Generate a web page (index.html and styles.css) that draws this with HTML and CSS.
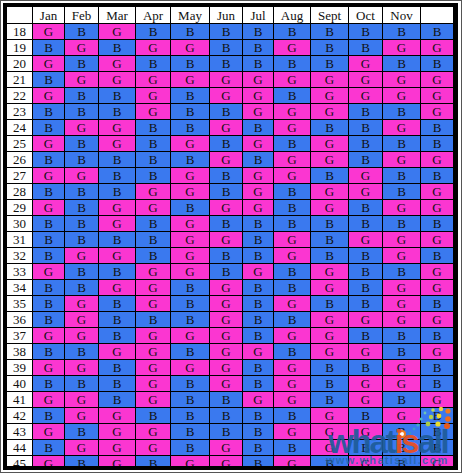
FILE: index.html
```html
<!DOCTYPE html>
<html>
<head>
<meta charset="utf-8">
<title>Chinese Gender Chart</title>
<link rel="stylesheet" href="styles.css">
</head>
<body>
<div class="frame">
  <div class="board">
    <div class="chart">
      <div class="h"></div><div class="h">Jan</div><div class="h">Feb</div><div class="h">Mar</div><div class="h">Apr</div><div class="h">May</div><div class="h">Jun</div><div class="h">Jul</div><div class="h">Aug</div><div class="h">Sept</div><div class="h">Oct</div><div class="h">Nov</div><div class="h"></div>
      <div class="n">18</div><div class="g">G</div><div class="b">B</div><div class="g">G</div><div class="b">B</div><div class="b">B</div><div class="b">B</div><div class="b">B</div><div class="b">B</div><div class="b">B</div><div class="b">B</div><div class="b">B</div><div class="b">B</div>
      <div class="n">19</div><div class="b">B</div><div class="g">G</div><div class="b">B</div><div class="g">G</div><div class="g">G</div><div class="b">B</div><div class="b">B</div><div class="g">G</div><div class="b">B</div><div class="b">B</div><div class="g">G</div><div class="g">G</div>
      <div class="n">20</div><div class="g">G</div><div class="b">B</div><div class="g">G</div><div class="b">B</div><div class="b">B</div><div class="b">B</div><div class="b">B</div><div class="b">B</div><div class="b">B</div><div class="g">G</div><div class="b">B</div><div class="b">B</div>
      <div class="n">21</div><div class="b">B</div><div class="g">G</div><div class="g">G</div><div class="g">G</div><div class="g">G</div><div class="g">G</div><div class="g">G</div><div class="g">G</div><div class="g">G</div><div class="g">G</div><div class="g">G</div><div class="g">G</div>
      <div class="n">22</div><div class="g">G</div><div class="b">B</div><div class="b">B</div><div class="g">G</div><div class="b">B</div><div class="g">G</div><div class="g">G</div><div class="b">B</div><div class="g">G</div><div class="g">G</div><div class="g">G</div><div class="g">G</div>
      <div class="n">23</div><div class="b">B</div><div class="b">B</div><div class="b">B</div><div class="g">G</div><div class="b">B</div><div class="b">B</div><div class="g">G</div><div class="g">G</div><div class="g">G</div><div class="b">B</div><div class="b">B</div><div class="g">G</div>
      <div class="n">24</div><div class="b">B</div><div class="g">G</div><div class="g">G</div><div class="b">B</div><div class="b">B</div><div class="g">G</div><div class="b">B</div><div class="g">G</div><div class="b">B</div><div class="b">B</div><div class="g">G</div><div class="b">B</div>
      <div class="n">25</div><div class="g">G</div><div class="b">B</div><div class="g">G</div><div class="b">B</div><div class="g">G</div><div class="b">B</div><div class="g">G</div><div class="b">B</div><div class="g">G</div><div class="b">B</div><div class="b">B</div><div class="b">B</div>
      <div class="n">26</div><div class="b">B</div><div class="b">B</div><div class="b">B</div><div class="b">B</div><div class="b">B</div><div class="g">G</div><div class="b">B</div><div class="g">G</div><div class="g">G</div><div class="b">B</div><div class="g">G</div><div class="g">G</div>
      <div class="n">27</div><div class="g">G</div><div class="g">G</div><div class="b">B</div><div class="b">B</div><div class="g">G</div><div class="b">B</div><div class="g">G</div><div class="g">G</div><div class="b">B</div><div class="g">G</div><div class="b">B</div><div class="b">B</div>
      <div class="n">28</div><div class="b">B</div><div class="b">B</div><div class="b">B</div><div class="g">G</div><div class="g">G</div><div class="b">B</div><div class="g">G</div><div class="b">B</div><div class="g">G</div><div class="g">G</div><div class="b">B</div><div class="g">G</div>
      <div class="n">29</div><div class="g">G</div><div class="b">B</div><div class="g">G</div><div class="g">G</div><div class="b">B</div><div class="g">G</div><div class="g">G</div><div class="b">B</div><div class="g">G</div><div class="b">B</div><div class="g">G</div><div class="g">G</div>
      <div class="n">30</div><div class="b">B</div><div class="b">B</div><div class="g">G</div><div class="b">B</div><div class="g">G</div><div class="b">B</div><div class="b">B</div><div class="b">B</div><div class="b">B</div><div class="b">B</div><div class="b">B</div><div class="b">B</div>
      <div class="n">31</div><div class="b">B</div><div class="b">B</div><div class="b">B</div><div class="b">B</div><div class="g">G</div><div class="g">G</div><div class="b">B</div><div class="g">G</div><div class="b">B</div><div class="g">G</div><div class="g">G</div><div class="g">G</div>
      <div class="n">32</div><div class="b">B</div><div class="g">G</div><div class="g">G</div><div class="b">B</div><div class="g">G</div><div class="b">B</div><div class="b">B</div><div class="g">G</div><div class="b">B</div><div class="b">B</div><div class="g">G</div><div class="b">B</div>
      <div class="n">33</div><div class="g">G</div><div class="b">B</div><div class="b">B</div><div class="g">G</div><div class="g">G</div><div class="b">B</div><div class="g">G</div><div class="b">B</div><div class="g">G</div><div class="b">B</div><div class="b">B</div><div class="g">G</div>
      <div class="n">34</div><div class="b">B</div><div class="b">B</div><div class="g">G</div><div class="g">G</div><div class="b">B</div><div class="g">G</div><div class="b">B</div><div class="b">B</div><div class="g">G</div><div class="b">B</div><div class="g">G</div><div class="g">G</div>
      <div class="n">35</div><div class="b">B</div><div class="g">G</div><div class="b">B</div><div class="g">G</div><div class="b">B</div><div class="g">G</div><div class="b">B</div><div class="g">G</div><div class="b">B</div><div class="b">B</div><div class="g">G</div><div class="b">B</div>
      <div class="n">36</div><div class="b">B</div><div class="g">G</div><div class="b">B</div><div class="b">B</div><div class="b">B</div><div class="g">G</div><div class="b">B</div><div class="b">B</div><div class="g">G</div><div class="g">G</div><div class="g">G</div><div class="g">G</div>
      <div class="n">37</div><div class="g">G</div><div class="g">G</div><div class="b">B</div><div class="g">G</div><div class="g">G</div><div class="g">G</div><div class="b">B</div><div class="g">G</div><div class="g">G</div><div class="b">B</div><div class="b">B</div><div class="b">B</div>
      <div class="n">38</div><div class="b">B</div><div class="b">B</div><div class="g">G</div><div class="g">G</div><div class="b">B</div><div class="g">G</div><div class="g">G</div><div class="b">B</div><div class="g">G</div><div class="g">G</div><div class="b">B</div><div class="g">G</div>
      <div class="n">39</div><div class="g">G</div><div class="g">G</div><div class="b">B</div><div class="g">G</div><div class="g">G</div><div class="g">G</div><div class="b">B</div><div class="g">G</div><div class="b">B</div><div class="b">B</div><div class="g">G</div><div class="b">B</div>
      <div class="n">40</div><div class="b">B</div><div class="b">B</div><div class="b">B</div><div class="g">G</div><div class="b">B</div><div class="g">G</div><div class="b">B</div><div class="g">G</div><div class="b">B</div><div class="g">G</div><div class="g">G</div><div class="b">B</div>
      <div class="n">41</div><div class="g">G</div><div class="g">G</div><div class="b">B</div><div class="g">G</div><div class="b">B</div><div class="b">B</div><div class="g">G</div><div class="g">G</div><div class="b">B</div><div class="g">G</div><div class="b">B</div><div class="g">G</div>
      <div class="n">42</div><div class="b">B</div><div class="g">G</div><div class="g">G</div><div class="b">B</div><div class="b">B</div><div class="b">B</div><div class="b">B</div><div class="b">B</div><div class="g">G</div><div class="b">B</div><div class="g">G</div><div class="b">B</div>
      <div class="n">43</div><div class="g">G</div><div class="b">B</div><div class="g">G</div><div class="g">G</div><div class="b">B</div><div class="b">B</div><div class="b">B</div><div class="g">G</div><div class="g">G</div><div class="g">G</div><div class="b">B</div><div class="b">B</div>
      <div class="n">44</div><div class="b">B</div><div class="g">G</div><div class="g">G</div><div class="g">G</div><div class="b">B</div><div class="g">G</div><div class="b">B</div><div class="b">B</div><div class="g">G</div><div class="b">B</div><div class="b">B</div><div class="b">B</div>
      <div class="n">45</div><div class="g">G</div><div class="b">B</div><div class="g">G</div><div class="b">B</div><div class="g">G</div><div class="g">G</div><div class="b">B</div><div class="g">G</div><div class="b">B</div><div class="g">G</div><div class="b">B</div><div class="g">G</div>
    </div>
  </div>
  <div class="wm" aria-hidden="true">
    <svg class="wm-dots" width="60" height="40" viewBox="0 0 60 40">
      <circle cx="46" cy="9" r="2.6" fill="#f07a22"/>
      <circle cx="46" cy="17" r="2.8" fill="#f06a1c"/>
      <circle cx="45" cy="24" r="3" fill="#e85a1a"/>
      <circle cx="39" cy="7" r="2.2" fill="#f2d23a"/>
      <circle cx="37" cy="14" r="2.4" fill="#f0d830"/>
      <circle cx="36" cy="22" r="2.6" fill="#e8dc2c"/>
      <circle cx="31" cy="8" r="1.8" fill="#c6d84a"/>
      <circle cx="29" cy="15" r="2.2" fill="#b4d24a"/>
      <circle cx="26" cy="22" r="2.4" fill="#a8cc48"/>
      <circle cx="23" cy="11" r="1.4" fill="#6cc4b4"/>
      <circle cx="19" cy="17" r="1.6" fill="#4fb8c0"/>
      <circle cx="16" cy="23" r="1.6" fill="#44aec4"/>
      <circle cx="12" cy="27" r="1.4" fill="#3aa2c4"/>
      <circle cx="8" cy="31" r="1.2" fill="#3a96c0"/>
      <circle cx="0" cy="32" r="3" fill="#fff" stroke="#f07a22" stroke-width="2"/>
    </svg>
    <div class="wm-word">what<span class="wm-is">is</span>all</div>
    <div class="wm-url">www.whatisall.com</div>
  </div>
</div>
</body>
</html>
```

FILE: styles.css
```css
html, body {
  margin: 0;
  padding: 0;
  background: #fff;
}

.frame {
  position: relative;
  width: 462px;
  height: 473px;
  box-sizing: border-box;
  border: 1px solid #555;
  padding: 2px 3px 2px 2px;
  background: #fff;
}

.board {
  height: 100%;
  box-sizing: border-box;
  border: solid #000;
  border-width: 4px 5px 4px 4px;
  overflow: hidden;
  background: #000;
}

.chart {
  display: grid;
  grid-template-columns: 25px 31px 33px 36px 34px 38px 32px 30px 36px 37px 33px 37px 32px;
  grid-template-rows: 16px;
  grid-auto-rows: 15px;
  gap: 1px;
  background: #000;
  font-family: "Liberation Serif", "Times New Roman", serif;
  font-size: 13px;
  line-height: 15px;
  color: #111;
}

.chart > div {
  text-align: center;
}

.h {
  background: #fff;
  line-height: 17px;
}

.n {
  background: #fff;
}

.g {
  background: #fb36d1;
}

.b {
  background: #3a79ef;
}

.wm {
  position: absolute;
  left: 0;
  top: 0;
  width: 462px;
  height: 475px;
  pointer-events: none;
}

.wm-dots {
  position: absolute;
  left: 401px;
  top: 401px;
  overflow: visible;
}

.wm-word {
  position: absolute;
  left: 327px;
  top: 425px;
  font-family: "Liberation Sans", Arial, sans-serif;
  font-weight: bold;
  font-size: 33px;
  line-height: 32px;
  letter-spacing: -2.2px;
  color: rgba(30, 92, 152, 0.93);
}

.wm-is {
  color: rgba(232, 80, 36, 0.95);
}

.wm-url {
  position: absolute;
  left: 325px;
  top: 454px;
  font-family: "Liberation Sans", Arial, sans-serif;
  font-weight: bold;
  font-size: 11px;
  line-height: 11px;
  letter-spacing: 1.3px;
  color: rgba(36, 104, 172, 0.85);
}
```
